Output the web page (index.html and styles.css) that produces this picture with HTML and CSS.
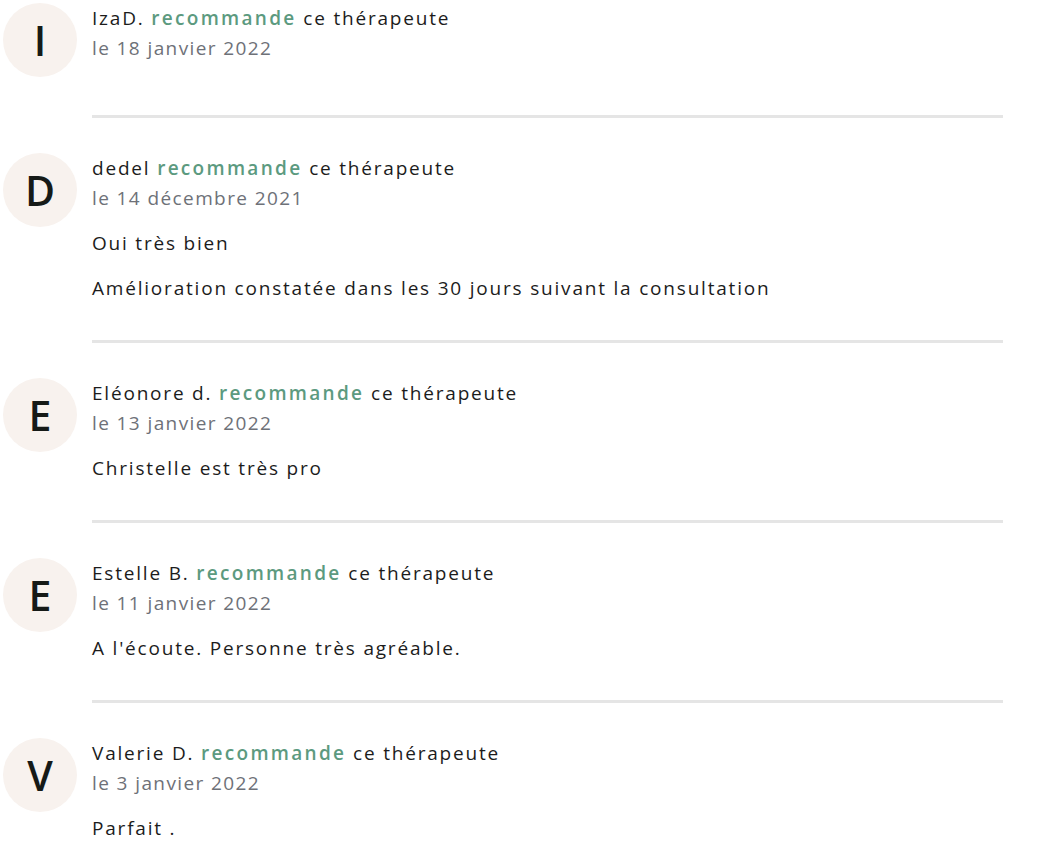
FILE: index.html
```html
<!DOCTYPE html>
<html lang="fr">
<head>
    <meta charset="UTF-8">
    <meta name="viewport" content="width=device-width, initial-scale=1.0">
    <title>Avis</title>
    <link rel="stylesheet" href="styles.css">
</head>
<body>
    <div class="reviews">
        <div class="review">
            <div class="avatar">I</div>
            <div class="content">
                <div class="author">IzaD. <span class="reco">recommande</span> ce thérapeute</div>
                <div class="date">le 18 janvier 2022</div>
            </div>
        </div>

        <div class="review">
            <div class="avatar">D</div>
            <div class="content">
                <div class="author">dedel <span class="reco">recommande</span> ce thérapeute</div>
                <div class="date">le 14 décembre 2021</div>
                <p>Oui très bien</p>
                <p>Amélioration constatée dans les 30 jours suivant la consultation</p>
            </div>
        </div>

        <div class="review">
            <div class="avatar">E</div>
            <div class="content">
                <div class="author">Eléonore d. <span class="reco">recommande</span> ce thérapeute</div>
                <div class="date">le 13 janvier 2022</div>
                <p>Christelle est très pro</p>
            </div>
        </div>

        <div class="review">
            <div class="avatar">E</div>
            <div class="content">
                <div class="author">Estelle B. <span class="reco">recommande</span> ce thérapeute</div>
                <div class="date">le 11 janvier 2022</div>
                <p>A l'écoute. Personne très agréable.</p>
            </div>
        </div>

        <div class="review">
            <div class="avatar">V</div>
            <div class="content">
                <div class="author">Valerie D. <span class="reco">recommande</span> ce thérapeute</div>
                <div class="date">le 3 janvier 2022</div>
                <p>Parfait .</p>
            </div>
        </div>
    </div>
</body>
</html>
```

FILE: styles.css
```css
body {
    font-family: 'Open Sans', sans-serif;
    background-color: #fff;
    color: #1c1c1c;
    margin: 0;
    padding: 0;
}

.reviews {
    width: 1000px;
    padding: 3px 0 0 3px;
}

.review {
    display: flex;
    gap: 15px;
}

.review + .review .content {
    padding-top: 35px;
}

.review + .review .avatar {
    margin-top: 35px;
}

.avatar {
    flex: none;
    width: 74px;
    height: 74px;
    border-radius: 50%;
    background-color: #f8f2ee;
    color: #161a17;
    font-size: 41px;
    font-weight: 600;
    display: flex;
    align-items: center;
    justify-content: center;
}

.content {
    flex: 1;
    min-height: 75px;
    font-size: 19px;
    line-height: 30px;
    letter-spacing: 1.8px;
    padding-bottom: 37px;
    border-bottom: 3px solid #e5e5e5;
}

.review:last-child .content {
    border-bottom: none;
}

.reco {
    color: #5c9a7f;
    font-weight: 600;
    letter-spacing: 2.3px;
}

.date {
    color: #6e7178;
    letter-spacing: 1.4px;
}

.content p {
    margin: 15px 0 0;
}
```
